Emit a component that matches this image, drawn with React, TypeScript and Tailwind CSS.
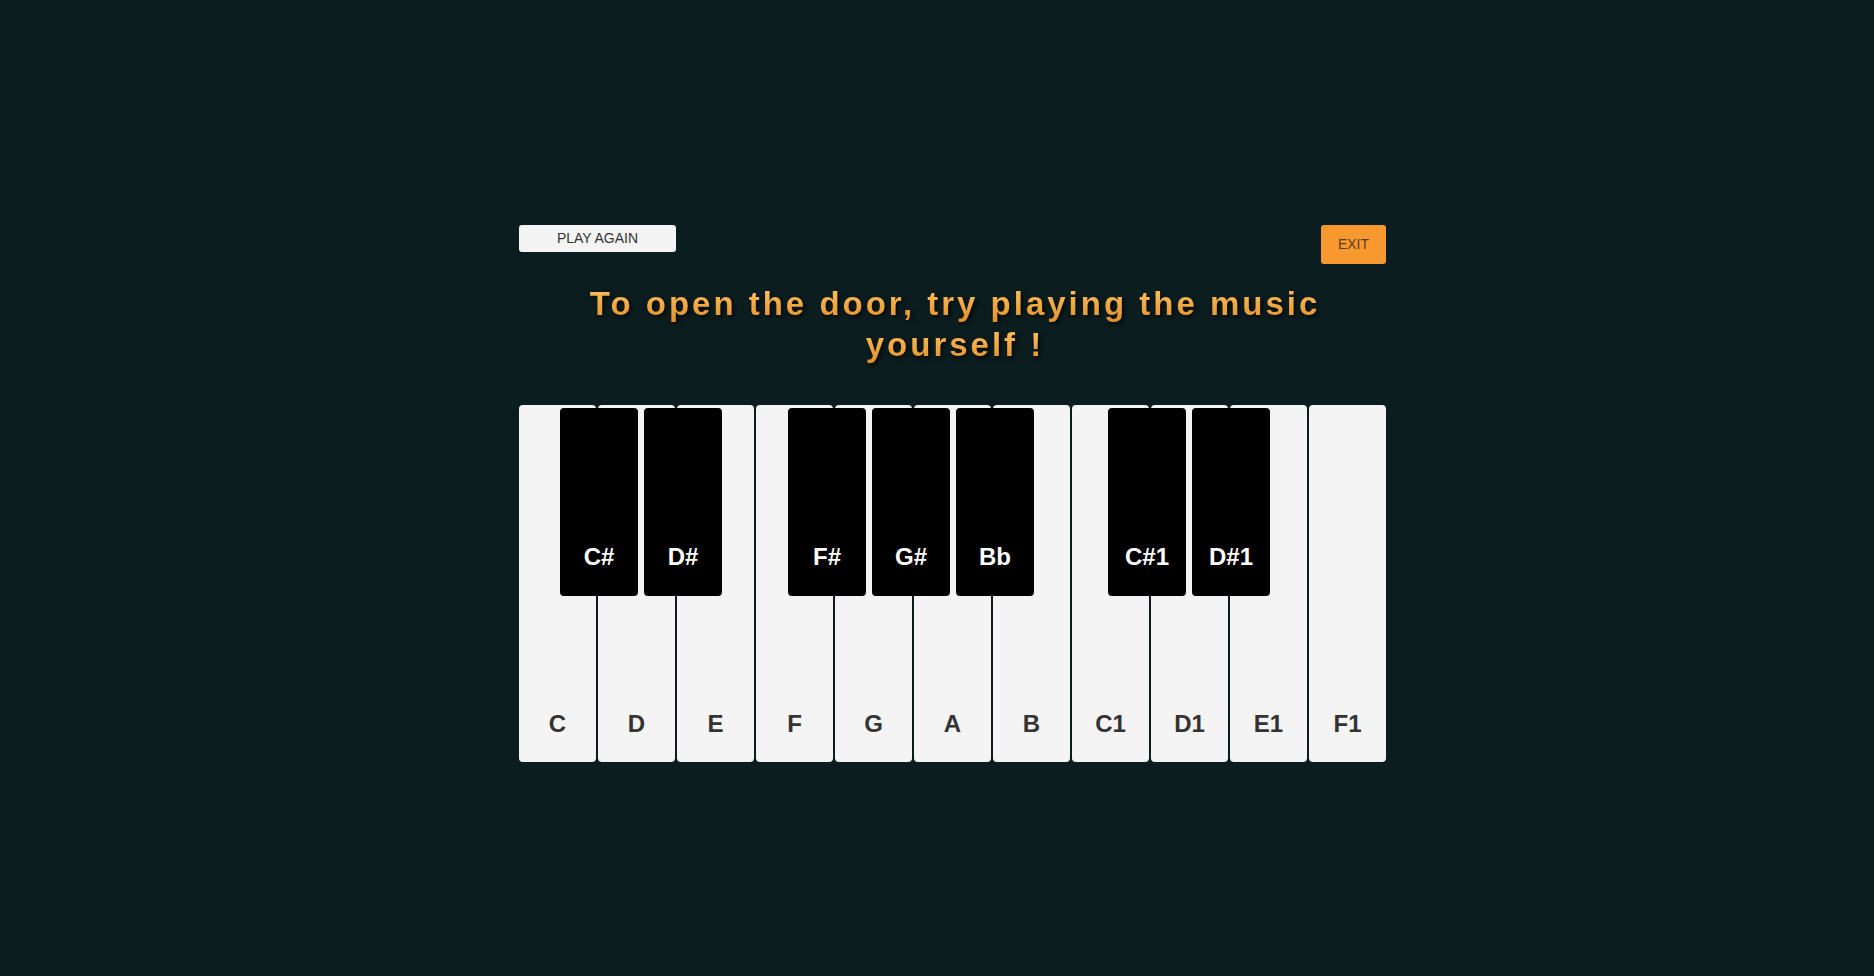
const whiteKeys = ["C", "D", "E", "F", "G", "A", "B", "C1", "D1", "E1", "F1"];

// left offsets (px) from the keyboard's left edge
const blackKeys = [
  { label: "C#", left: 41 },
  { label: "D#", left: 125 },
  { label: "F#", left: 269 },
  { label: "G#", left: 353 },
  { label: "Bb", left: 437 },
  { label: "C#1", left: 589 },
  { label: "D#1", left: 673 },
];

const titleLines = ["To open the door, try playing the music", "yourself !"];

export default function App() {
  return (
    <main className="min-h-screen bg-[#0c1d1f] pl-[31px] pt-[225px] font-['Liberation_Sans',Arial,sans-serif]">
      <div className="mx-auto w-[867px]">
        {/* top buttons */}
        <div className="flex items-start justify-between">
          <button className="h-[27px] w-[157px] rounded-[3px] bg-[#f4f4f4] text-[14px] text-[#333]">
            PLAY AGAIN
          </button>
          <button className="h-[39px] w-[65px] rounded-[3px] bg-[#f7992f] text-[14px] text-[#5e3b16]">
            EXIT
          </button>
        </div>

        <h1 className="mt-[19px] pl-[5px] text-center text-[33px] font-bold leading-[41px] tracking-[3px] drop-shadow-[2px_2px_2px_rgba(0,0,0,0.75)]">
          {titleLines.map((line) => (
            <span
              key={line}
              className="block bg-linear-to-b from-[#ffc862] to-[#e38d22] bg-clip-text text-transparent"
            >
              {line}
            </span>
          ))}
        </h1>

        {/* keyboard */}
        <div className="relative mt-[40px] flex h-[357px] gap-[2px]">
          {whiteKeys.map((k) => (
            <div
              key={k}
              className="flex flex-1 items-end justify-center rounded-[4px] bg-[#f4f4f4] pb-[26px] text-2xl font-bold leading-none text-[#333]"
            >
              {k}
            </div>
          ))}
          {blackKeys.map((k) => (
            <div
              key={k.label}
              className="absolute top-[3px] flex h-[188px] w-[78px] items-end justify-center rounded-[4px] bg-black pb-[27px] text-2xl font-bold leading-none text-white"
              style={{ left: k.left }}
            >
              {k.label}
            </div>
          ))}
        </div>
      </div>
    </main>
  );
}
